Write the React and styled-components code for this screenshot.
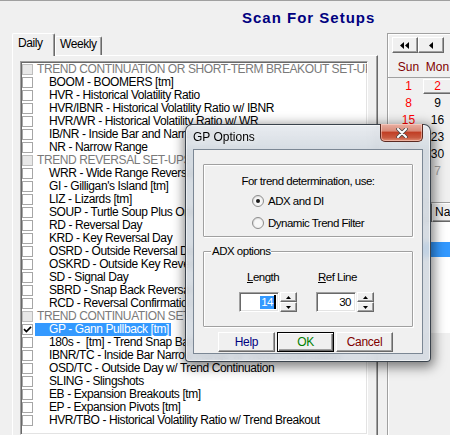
import React from "react";
import styled, { createGlobalStyle, css } from "styled-components";

const UI_FONT = `"Liberation Sans", Arial, sans-serif`;

const GlobalStyle = createGlobalStyle`
  html, body { margin: 0; padding: 0; background: #f0f0f0; }
  body {
    font-family: ${UI_FONT};
    font-size: 12px;
    letter-spacing: -0.4px;
    color: #000;
  }
`;

const raised = css`
  border-top: 1px solid #fff;
  border-left: 1px solid #fff;
  border-right: 1px solid #696969;
  border-bottom: 1px solid #696969;
  box-shadow: inset -1px -1px 0 #a0a0a0;
`;

const sunken = css`
  border-top: 1px solid #a0a0a0;
  border-left: 1px solid #a0a0a0;
  border-right: 1px solid #fff;
  border-bottom: 1px solid #fff;
  box-shadow: inset 1px 1px 0 #696969, inset -1px -1px 0 #e3e3e3;
`;

const Screen = styled.div`
  position: relative;
  width: 450px;
  height: 435px;
  overflow: hidden;
  box-sizing: border-box;
  border-top: 1px solid #a0a0a0;
  background: #f0f0f0;
  display: flex;
  flex-direction: column;
`;

const Heading = styled.h1`
  margin: 0;
  height: 32px;
  flex: none;
  box-sizing: border-box;
  padding: 8px 0 0 242px;
  font: bold 15px/18px ${UI_FONT};
  letter-spacing: 1px;
  color: #000080;
`;

const Workspace = styled.div`
  flex: 1;
  display: flex;
  min-height: 0;
`;

const LeftCol = styled.div`
  margin-left: 12px;
  width: 366px;
  display: flex;
  flex-direction: column;
`;

const TabStrip = styled.div`
  height: 22px;
  display: flex;
  align-items: flex-end;
`;

const Tab = styled.div`
  box-sizing: border-box;
  position: relative;
  width: ${(p) => p.$w}px;
  height: ${(p) => (p.$active ? 23 : 19)}px;
  margin-bottom: ${(p) => (p.$active ? -1 : 0)}px;
  z-index: ${(p) => (p.$active ? 1 : 0)};
  padding: ${(p) => (p.$active ? "2px 0 0 5px" : "0 0 0 4px")};
  background: #f0f0f0;
  border-top: 1px solid #fff;
  border-left: 1px solid #fff;
  border-right: 1px solid #696969;
  border-radius: 2px 2px 0 0;
  box-shadow: inset -1px 0 0 #a0a0a0;
  line-height: 15px;
`;

const TabPanel = styled.div`
  flex: 1;
  display: flex;
  flex-direction: column;
  box-sizing: border-box;
  padding: 5px 9px 0 7px;
  border-top: 1px solid #fff;
  border-left: 1px solid #fff;
  border-right: 1px solid #696969;
  box-shadow: inset -1px 0 0 #a0a0a0;
`;

const ListBox = styled.div`
  flex: 1;
  background: #fff;
  padding-top: 1px;
  overflow: hidden;
  ${sunken}
`;

const Row = styled.div`
  height: 13px;
  display: flex;
  align-items: center;
`;

const CheckBox = styled.span`
  box-sizing: border-box;
  flex: none;
  width: 11px;
  height: 11px;
  margin-left: 1px;
  display: flex;
  align-items: center;
  justify-content: center;
  border: 1px solid ${(p) => (p.$header ? "#bdbdbd" : "#a6a6a6")};
  background: ${(p) => (p.$header ? "#e8e8e8" : "#fff")};
`;

const RowText = styled.span`
  margin-left: 2px;
  padding: 0 2px 0 ${(p) => (p.$indent ? 14 : 2)}px;
  line-height: 13px;
  white-space: pre;
  color: ${(p) => (p.$selected ? "#fff" : p.$header ? "#7a7a7a" : "#000")};
  background: ${(p) => (p.$selected ? "#3399ff" : "transparent")};
`;

const RightPanel = styled.div`
  flex: 1;
  margin-left: 9px;
  display: flex;
  flex-direction: column;
  border-top: 1px solid #a0a0a0;
  border-left: 1px solid #a0a0a0;
  box-shadow: inset 1px 1px 0 #fff;
  letter-spacing: 0;
`;

const NavRow = styled.div`
  display: flex;
  padding: 3px 0 0 4px;
`;

const NavButton = styled.div`
  box-sizing: border-box;
  width: 26px;
  height: 16px;
  display: flex;
  align-items: center;
  justify-content: center;
  background: #f0f0f0;
  ${raised}
`;

const CalHeader = styled.div`
  margin-top: 4px;
  height: 20px;
  padding-left: 6px;
  display: grid;
  grid-template-columns: repeat(7, 29px);
  border-bottom: 1px solid #a0a0a0;
`;

const DayName = styled.span`
  text-align: center;
  line-height: 20px;
  color: #800000;
`;

const DateGrid = styled.div`
  padding-left: 6px;
  display: grid;
  grid-template-columns: repeat(7, 29px);
  grid-auto-rows: 17px;
`;

const DateCell = styled.span`
  box-sizing: border-box;
  text-align: center;
  line-height: 17px;
  color: ${(p) => (p.$other ? "#a0a0a0" : p.$red ? "#ff0000" : "#000")};
  ${(p) =>
    p.$today &&
    css`
      margin: 1px 0;
      line-height: 13px;
      background: #f0f0f0;
      ${raised}
    `}
`;

const SymbolGrid = styled.div`
  margin-top: 22px;
  border-top: 1px solid #a0a0a0;
  background: #fff;
  height: 130px;
`;

const GridHead = styled.div`
  display: flex;
  height: 19px;
`;

const HeadCell = styled.span`
  box-sizing: border-box;
  width: ${(p) => p.$w}px;
  padding-left: 2px;
  line-height: 17px;
  background: #f0f0f0;
  ${raised}
`;

const GridRow = styled.div`
  height: 15px;
  margin-top: ${(p) => (p.$first ? 5 : 0)}px;
  background: ${(p) => (p.$selected ? "#3399ff" : "transparent")};
`;

/* dialog */

const Dialog = styled.div`
  position: absolute;
  left: 185px;
  top: 123px;
  width: 246px;
  height: 238px;
  box-sizing: border-box;
  display: flex;
  flex-direction: column;
  padding: 0 7px 7px;
  border: 1px solid rgba(30, 40, 50, 0.85);
  border-radius: 7px 7px 4px 4px;
  background: linear-gradient(
    to bottom,
    rgba(230, 234, 239, 0.88),
    rgba(208, 215, 222, 0.9) 26px,
    rgba(212, 218, 225, 0.9)
  );
  backdrop-filter: blur(3px);
  box-shadow: inset 0 0 0 1px rgba(255, 255, 255, 0.55),
    1px 3px 12px 2px rgba(0, 0, 0, 0.5);
`;

const Caption = styled.div`
  height: 24px;
  flex: none;
  display: flex;
  justify-content: space-between;
  align-items: flex-start;
`;

const CaptionText = styled.span`
  font: 12px/24px ${UI_FONT};
  letter-spacing: 0;
  color: #000;
  text-shadow: 0 0 6px rgba(255, 255, 255, 0.95);
`;

const CloseButton = styled.div`
  box-sizing: border-box;
  width: 43px;
  height: 18px;
  margin-top: -1px;
  display: flex;
  align-items: center;
  justify-content: center;
  border: 1px solid #5b2a22;
  border-top: none;
  border-radius: 0 0 5px 5px;
  background: linear-gradient(
    to bottom,
    #e9b0a3 0%,
    #d98b79 40%,
    #c13f25 50%,
    #c85a40 80%,
    #e28f74 100%
  );
  box-shadow: inset 0 0 0 1px rgba(255, 220, 210, 0.5);
`;

const Client = styled.div`
  flex: 1;
  background: #f0f0f0;
  border: 1px solid #7b8794;
  display: flex;
  flex-direction: column;
  font-size: 11.5px;
  letter-spacing: -0.5px;
`;

const GroupBox = styled.div`
  position: relative;
  box-sizing: border-box;
  width: 210px;
  height: ${(p) => p.$h}px;
  margin: ${(p) => p.$top}px 0 0 9px;
  border: 1px solid #a0a0a0;
  box-shadow: inset 1px 1px 0 #fff, 1px 1px 0 #fff;
  border-radius: 1px;
`;

const GroupTitle = styled.span`
  position: absolute;
  top: -7px;
  left: 7px;
  padding: 0 1px;
  line-height: 13px;
  background: #f0f0f0;
`;

const Prompt = styled.div`
  padding-top: 10px;
  line-height: 13px;
  text-align: center;
`;

const RadioRow = styled.label`
  height: 20px;
  margin: ${(p) => (p.$first ? 3 : 2)}px 0 0 48px;
  display: flex;
  align-items: center;
  gap: 4px;
  line-height: 13px;
`;

const Fields = styled.div`
  display: flex;
  gap: 19px;
  padding: 19px 0 0 35px;
`;

const Field = styled.div`
  width: 58px;
  display: flex;
  flex-direction: column;
  gap: 8px;
`;

const FieldLabel = styled.span`
  margin-left: ${(p) => p.$indent}px;
  line-height: 13px;
  u {
    text-decoration: underline;
  }
`;

const SpinRow = styled.div`
  display: flex;
  gap: 1px;
`;

const SpinInput = styled.div`
  box-sizing: border-box;
  width: 40px;
  height: 20px;
  padding-right: ${(p) => p.$pad}px;
  display: flex;
  align-items: center;
  justify-content: flex-end;
  background: #fff;
  ${sunken}
`;

const Selected = styled.span`
  padding: 0 1px;
  line-height: 13px;
  color: #fff;
  background: #3399ff;
`;

const Caret = styled.span`
  width: 2px;
  height: 14px;
  background: #000;
`;

const Spinner = styled.div`
  width: 17px;
  height: 20px;
  display: flex;
  flex-direction: column;
`;

const SpinButton = styled.div`
  flex: 1;
  box-sizing: border-box;
  display: flex;
  align-items: center;
  justify-content: center;
  background: #f0f0f0;
  ${raised}
`;

const ButtonRow = styled.div`
  display: flex;
  gap: 2px;
  margin-top: 5px;
  padding-left: 24px;
`;

const DlgButton = styled.div`
  box-sizing: border-box;
  width: 57px;
  height: 20px;
  display: flex;
  align-items: center;
  justify-content: center;
  font-size: 12px;
  letter-spacing: -0.3px;
  background: #f0f0f0;
  color: ${(p) => p.$color};
  ${(p) =>
    p.$default
      ? css`
          border: 1px solid #000;
          box-shadow: inset 1px 1px 0 #fff, inset -1px -1px 0 #696969,
            inset -2px -2px 0 #a0a0a0;
        `
      : raised}
`;

const ITEMS = [
  { t: "TREND CONTINUATION OR SHORT-TERM BREAKOUT SET-UPS", h: true },
  { t: "BOOM - BOOMERS [tm]" },
  { t: "HVR - Historical Volatility Ratio" },
  { t: "HVR/IBNR - Historical Volatility Ratio w/ IBNR" },
  { t: "HVR/WR - Historical Volatility Ratio w/ WR" },
  { t: "IB/NR - Inside Bar and Narrow Range" },
  { t: "NR - Narrow Range" },
  { t: "TREND REVERSAL SET-UPS", h: true },
  { t: "WRR - Wide Range Reversal" },
  { t: "GI - Gilligan's Island [tm]" },
  { t: "LIZ - Lizards [tm]" },
  { t: "SOUP - Turtle Soup Plus One" },
  { t: "RD - Reversal Day" },
  { t: "KRD - Key Reversal Day" },
  { t: "OSRD - Outside Reversal Day" },
  { t: "OSKRD - Outside Key Reversal Day" },
  { t: "SD - Signal Day" },
  { t: "SBRD - Snap Back Reversal Day" },
  { t: "RCD - Reversal Confirmation Day" },
  { t: "TREND CONTINUATION SET-UPS", h: true },
  { t: "GP - Gann Pullback [tm]", checked: true, sel: true },
  { t: "180s -  [tm] - Trend Snap Back" },
  { t: "IBNR/TC - Inside Bar Narrow Range w/ Trend Continuation" },
  { t: "OSD/TC - Outside Day w/ Trend Continuation" },
  { t: "SLING - Slingshots" },
  { t: "EB - Expansion Breakouts [tm]" },
  { t: "EP - Expansion Pivots [tm]" },
  { t: "HVR/TBO - Historical Volatility Ratio w/ Trend Breakout" },
];

const DAYS = ["Sun", "Mon", "Tue", "Wed", "Thu", "Fri", "Sat"];

function buildDates() {
  const out = [];
  for (let i = 0; i < 42; i++) {
    const n = i + 1;
    const other = n > 30;
    out.push({
      d: other ? n - 30 : n,
      other,
      red: !other && (i % 7 === 0 || n === 2),
      today: n === 2,
    });
  }
  return out;
}

const Check = () => (
  <svg width="9" height="9" viewBox="0 0 9 9">
    <path d="M1 4.2 L3.4 6.6 L8 1.8" fill="none" stroke="#000" strokeWidth="1.7" />
  </svg>
);

const Radio = ({ on }) => (
  <svg width="12" height="12" viewBox="0 0 12 12">
    <defs>
      <linearGradient id="rg" x1="0" y1="0" x2="1" y2="1">
        <stop offset="0" stopColor="#d4d4d4" />
        <stop offset="1" stopColor="#ffffff" />
      </linearGradient>
    </defs>
    <circle cx="6" cy="6" r="5.5" fill="url(#rg)" stroke="#8d8d8d" />
    <circle cx="6" cy="6" r="3.8" fill="#f7f7f7" />
    {on && <circle cx="6" cy="6" r="2" fill="#1b1b1b" />}
  </svg>
);

const Tri = ({ up }) => (
  <svg width="5" height="3" viewBox="0 0 5 3">
    <path d={up ? "M2.5 0 L5 3 L0 3 Z" : "M0 0 L5 0 L2.5 3 Z"} fill="#000" />
  </svg>
);

export default function App() {
  const dates = buildDates();
  return (
    <>
      <GlobalStyle />
      <Screen>
        <Heading>Scan For Setups</Heading>
        <Workspace>
          <LeftCol>
            <TabStrip>
              <Tab $active $w={43}>Daily</Tab>
              <Tab $w={47}>Weekly</Tab>
            </TabStrip>
            <TabPanel>
              <ListBox>
                {ITEMS.map((it) => (
                  <Row key={it.t}>
                    <CheckBox $header={it.h}>{it.checked && <Check />}</CheckBox>
                    <RowText $indent={!it.h} $header={it.h} $selected={it.sel}>
                      {it.t}
                    </RowText>
                  </Row>
                ))}
              </ListBox>
            </TabPanel>
          </LeftCol>
          <RightPanel>
            <NavRow>
              <NavButton>
                <svg width="10" height="7" viewBox="0 0 10 7">
                  <path d="M0 3.5 L4 0 L4 7 Z M5 3.5 L9 0 L9 7 Z" fill="#000" />
                </svg>
              </NavButton>
              <NavButton>
                <svg width="4" height="7" viewBox="0 0 4 7">
                  <path d="M0 3.5 L4 0 L4 7 Z" fill="#000" />
                </svg>
              </NavButton>
            </NavRow>
            <CalHeader>
              {DAYS.map((d) => (
                <DayName key={d}>{d}</DayName>
              ))}
            </CalHeader>
            <DateGrid>
              {dates.map((c, i) => (
                <DateCell key={i} $other={c.other} $red={c.red} $today={c.today}>
                  {c.d}
                </DateCell>
              ))}
            </DateGrid>
            <SymbolGrid>
              <GridHead>
                <HeadCell $w={44}>Sym</HeadCell>
                <HeadCell $w={120}>Name</HeadCell>
              </GridHead>
              <GridRow $first />
              <GridRow $selected />
            </SymbolGrid>
          </RightPanel>
        </Workspace>

        <Dialog>
          <Caption>
            <CaptionText>GP Options</CaptionText>
            <CloseButton>
              <svg width="12" height="10" viewBox="0 0 12 10">
                <path d="M2 1 L10 9 M10 1 L2 9" stroke="#4a4a4a" strokeWidth="3.6" strokeLinecap="round" />
                <path d="M2 1 L10 9 M10 1 L2 9" stroke="#fff" strokeWidth="2" strokeLinecap="round" />
              </svg>
            </CloseButton>
          </Caption>
          <Client>
            <GroupBox $h={73} $top={14}>
              <Prompt>For trend determination, use:</Prompt>
              <RadioRow $first>
                <Radio on />
                ADX and DI
              </RadioRow>
              <RadioRow>
                <Radio />
                Dynamic Trend Filter
              </RadioRow>
            </GroupBox>
            <GroupBox $h={76} $top={14}>
              <GroupTitle>ADX options</GroupTitle>
              <Fields>
                <Field>
                  <FieldLabel $indent={8}>
                    <u>L</u>ength
                  </FieldLabel>
                  <SpinRow>
                    <SpinInput $pad={2}>
                      <Selected>14</Selected>
                      <Caret />
                    </SpinInput>
                    <Spinner>
                      <SpinButton><Tri up /></SpinButton>
                      <SpinButton><Tri /></SpinButton>
                    </Spinner>
                  </SpinRow>
                </Field>
                <Field>
                  <FieldLabel $indent={2}>
                    <u>R</u>ef Line
                  </FieldLabel>
                  <SpinRow>
                    <SpinInput $pad={4}>30</SpinInput>
                    <Spinner>
                      <SpinButton><Tri up /></SpinButton>
                      <SpinButton><Tri /></SpinButton>
                    </Spinner>
                  </SpinRow>
                </Field>
              </Fields>
            </GroupBox>
            <ButtonRow>
              <DlgButton $color="#000080">Help</DlgButton>
              <DlgButton $color="#008000" $default>OK</DlgButton>
              <DlgButton $color="#800000">Cancel</DlgButton>
            </ButtonRow>
          </Client>
        </Dialog>
      </Screen>
    </>
  );
}
